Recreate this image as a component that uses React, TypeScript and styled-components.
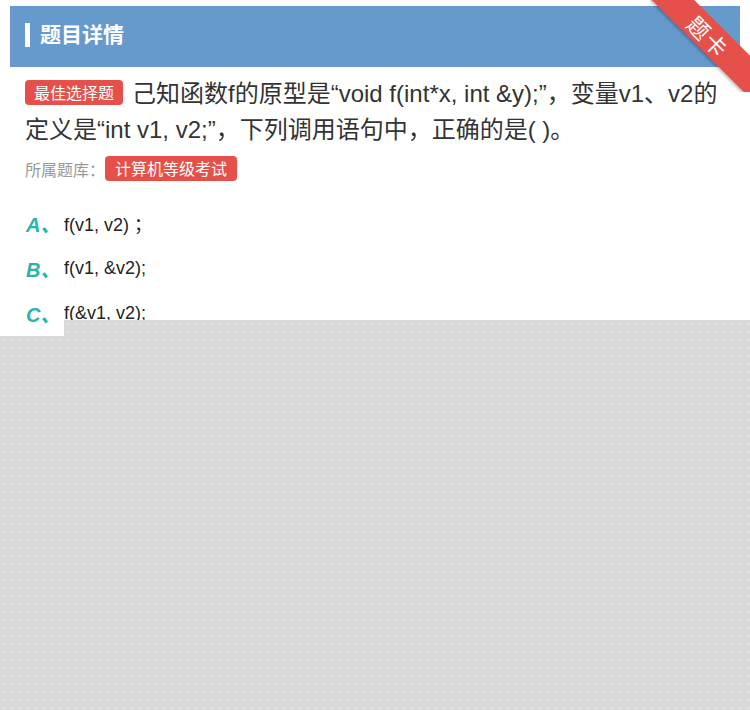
import React from 'react';
import styled, { createGlobalStyle } from 'styled-components';

const GlobalStyle = createGlobalStyle`
  html, body {
    margin: 0;
    padding: 0;
    background: #fff;
  }
  body {
    font-family: "Liberation Sans", "Noto Sans CJK SC", sans-serif;
    color: #333;
  }
`;

const Page = styled.div`
  position: relative;
  width: 750px;
  min-height: 710px;
  padding: 6px 10px 0;
  box-sizing: border-box;
  overflow: hidden;
`;

const Header = styled.div`
  height: 61px;
  background: #6699cc;
  display: flex;
  align-items: center;
  padding: 0 0 8px 15px;
  box-sizing: border-box;
  gap: 10px;
`;

const HeaderBar = styled.span`
  width: 5px;
  height: 24px;
  margin-top: 4px;
  background: #fff;
`;

const HeaderTitle = styled.h2`
  margin: 0;
  font-size: 21px;
  font-weight: 700;
  color: #fff;
  font-family: "Noto Sans CJK SC", sans-serif;
`;

const RibbonBox = styled.div`
  position: absolute;
  top: 0;
  right: 0;
  width: 100px;
  height: 92px;
  overflow: hidden;
`;

const RibbonFold = styled.div`
  position: absolute;
  right: 0;
  top: 66px;
  width: 0;
  height: 0;
  border-left: 10px solid #a8342e;
  border-bottom: 12px solid transparent;
`;

const RibbonStrip = styled.div`
  position: absolute;
  left: -16px;
  top: 21px;
  width: 150px;
  height: 30px;
  background: #e5514a;
  transform: rotate(45deg);
  display: flex;
  align-items: center;
  justify-content: center;
  color: #fff;
  font-size: 22px;
  letter-spacing: 2px;
  font-family: "Noto Sans CJK SC", sans-serif;
  box-shadow: 0 2px 3px rgba(0, 0, 0, 0.25);
`;

const Content = styled.div`
  padding: 9px 15px 0;
`;

const Question = styled.div`
  font-size: 24px;
  line-height: 36px;
  color: #333;
  padding-right: 6px;
`;

const Tag = styled.span`
  display: inline-block;
  background: #e5514a;
  color: #fff;
  font-size: 16px;
  line-height: 25px;
  padding: 0 9px;
  border-radius: 4px;
  margin-right: 9px;
  vertical-align: 3px;
  font-family: "Noto Sans CJK SC", sans-serif;
`;

const Source = styled.div`
  display: flex;
  align-items: center;
  margin-top: 8px;
  font-size: 16px;
  color: #999;
  font-family: "Noto Sans CJK SC", sans-serif;
`;

const SourceTag = styled(Tag)`
  margin: 0;
  padding: 0 10px;
  vertical-align: baseline;
`;

const Options = styled.div`
  display: flex;
  flex-direction: column;
  gap: 17px;
  margin-top: 28px;
`;

const Option = styled.div`
  display: flex;
  align-items: center;
  height: 28px;
`;

const Letter = styled.span`
  width: 38px;
  padding-left: 1px;
  color: #2bb4a6;
  font-size: 20px;
  font-weight: 700;
  font-style: italic;
`;

const OptionText = styled.span`
  font-size: 18px;
  color: #222;
`;

const Overlay = styled.div`
  position: absolute;
  top: 320px;
  left: 0;
  right: 0;
  bottom: 0;
  background-color: #d9d9d9;
  background-image: radial-gradient(circle, #e6e6e6 1px, transparent 1.2px);
  background-size: 8px 8px;
  clip-path: polygon(64px 0, 100% 0, 100% 100%, 0 100%, 0 16px, 64px 16px);
`;

const options = [
  { key: 'A', text: 'f(v1, v2) ；' },
  { key: 'B', text: 'f(v1, &v2);' },
  { key: 'C', text: 'f(&v1, v2);' },
];

export default function App() {
  return (
    <>
      <GlobalStyle />
      <Page>
        <Header>
          <HeaderBar />
          <HeaderTitle>题目详情</HeaderTitle>
        </Header>
        <RibbonBox>
          <RibbonFold />
          <RibbonStrip>题卡</RibbonStrip>
        </RibbonBox>
        <Content>
          <Question>
            <Tag>最佳选择题</Tag>
            己知函数f的原型是“void f(int*x, int &y);”，变量v1、v2的定义是“int v1, v2;”，下列调用语句中，正确的是( )。
          </Question>
          <Source>
            所属题库：<SourceTag>计算机等级考试</SourceTag>
          </Source>
          <Options>
            {options.map(o => (
              <Option key={o.key}>
                <Letter>{o.key}、</Letter>
                <OptionText>{o.text}</OptionText>
              </Option>
            ))}
          </Options>
        </Content>
        <Overlay />
      </Page>
    </>
  );
}
